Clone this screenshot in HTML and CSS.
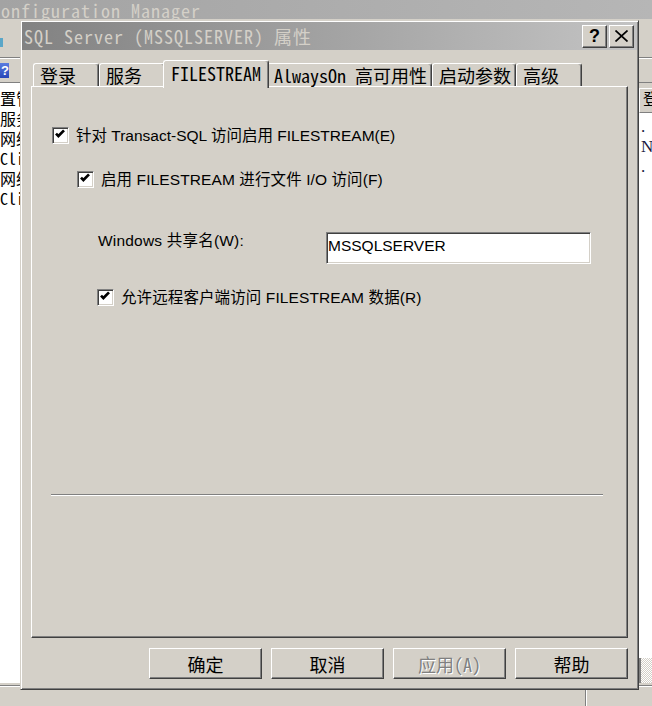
FILE: index.html
```html
<!DOCTYPE html>
<html lang="zh-CN">
<head>
<meta charset="utf-8">
<title>SQL Server (MSSQLSERVER) 属性</title>
<link rel="stylesheet" href="styles.css">
</head>
<body>
<div class="app">
  <div class="app-title mono">Configuration Manager</div>
  <div class="app-menu"><span class="menu-icon"></span></div>
  <div class="app-toolbar"><span class="help-icon">?</span></div>
  <div class="app-main">
    <ul class="tree mono">
      <li>置管</li>
      <li>服务</li>
      <li>网络</li>
      <li>Cli</li>
      <li>网络</li>
      <li>Cli</li>
    </ul>
    <div class="app-center"></div>
    <div class="list">
      <div class="list-head">登</div>
      <ul class="list-body">
        <li>.</li>
        <li>N</li>
        <li>.</li>
      </ul>
      <div class="hscroll"></div>
    </div>
  </div>
  <div class="app-status">
    <div class="status-cell"></div>
    <div class="status-cell grow"></div>
  </div>
</div>

<div class="dialog">
  <div class="caption">
    <span class="caption-text mono">SQL Server (MSSQLSERVER) 属性</span>
    <div class="caption-buttons">
      <button class="cap-btn help" type="button">?</button>
      <button class="cap-btn close" type="button"><svg width="13" height="12" viewBox="0 0 13 12"><path d="M0.5 0.5 L12.5 11.5 M12.5 0.5 L0.5 11.5" stroke="#000" stroke-width="1.7" fill="none"/></svg></button>
    </div>
  </div>
  <div class="dialog-body">
    <div class="tabs mono">
      <div class="tab">登录</div>
      <div class="tab">服务</div>
      <div class="tab active">FILESTREAM</div>
      <div class="tab">AlwaysOn 高可用性</div>
      <div class="tab">启动参数</div>
      <div class="tab">高级</div>
    </div>
    <div class="panel">
      <div class="check row-enable">
        <span class="box"><svg width="13" height="13" viewBox="0 0 13 13"><polyline points="2,4.6 4.4,7 10,1.4" fill="none" stroke="#000" stroke-width="2.7"/></svg></span>
        <span class="label">针对 Transact-SQL 访问启用 FILESTREAM(E)</span>
      </div>
      <div class="check row-io">
        <span class="box"><svg width="13" height="13" viewBox="0 0 13 13"><polyline points="2,4.6 4.4,7 10,1.4" fill="none" stroke="#000" stroke-width="2.7"/></svg></span>
        <span class="label">启用 FILESTREAM 进行文件 I/O 访问(F)</span>
      </div>
      <div class="share-row">
        <span class="share-label">Windows 共享名(W):</span>
        <div class="textbox">MSSQLSERVER</div>
      </div>
      <div class="check row-remote">
        <span class="box"><svg width="13" height="13" viewBox="0 0 13 13"><polyline points="2,4.6 4.4,7 10,1.4" fill="none" stroke="#000" stroke-width="2.7"/></svg></span>
        <span class="label">允许远程客户端访问 FILESTREAM 数据(R)</span>
      </div>
      <div class="sep"></div>
    </div>
    <div class="buttons mono">
      <button class="btn" type="button">确定</button>
      <button class="btn" type="button">取消</button>
      <button class="btn disabled" type="button">应用(A)</button>
      <button class="btn" type="button">帮助</button>
    </div>
  </div>
</div>
</body>
</html>
```

FILE: styles.css
```css
* { box-sizing: border-box; }

html, body {
  margin: 0;
  padding: 0;
}

body {
  width: 652px;
  height: 706px;
  overflow: hidden;
  position: relative;
  background: #d4d0c8;
  color: #000;
  font-family: "Liberation Sans", "Noto Sans CJK SC", sans-serif;
}

.mono {
  font-family: "Noto Sans Mono CJK SC", "Liberation Mono", "Noto Sans CJK SC", monospace;
}

/* ---------- background application window ---------- */
.app {
  display: flex;
  flex-direction: column;
  height: 706px;
}

.app-title {
  height: 19px;
  background: linear-gradient(to right, #a3a3a3, #b6b6b6);
  color: #d4d0c8;
  font-size: 18px;
  letter-spacing: 1px;
  line-height: 20px;
  white-space: nowrap;
  overflow: hidden;
  text-indent: -9px;
}

.app-menu {
  height: 39px;
  padding-top: 19px;
  border-bottom: 1px solid #808080;
}

.menu-icon {
  display: block;
  width: 3px;
  height: 9px;
  background: #5aa6c8;
}

.app-toolbar {
  height: 24px;
  padding-top: 4px;
  border-top: 1px solid #fff;
}

.help-icon {
  display: block;
  width: 9px;
  height: 15px;
  background: linear-gradient(#5a7ce0, #2746b8);
  color: #fff;
  font: bold 13px/15px "Liberation Sans", sans-serif;
  text-align: right;
  overflow: hidden;
}

.app-main {
  flex: 1;
  display: flex;
  padding-bottom: 2px;
  border-bottom: 1px solid #808080;
  box-shadow: 0 1px 0 #fff;
}

.tree {
  width: 20px;
  margin: 0;
  padding: 5px 0 0;
  list-style: none;
  background: #fff;
  border-top: 1px solid #808080;
  overflow: hidden;
  font-size: 16px;
  line-height: 20px;
  white-space: nowrap;
}

.app-center {
  flex: 1;
}

.list {
  width: 13px;
  display: flex;
  flex-direction: column;
  border-top: 1px solid #808080;
  padding-top: 5px;
  overflow: hidden;
}

.list-head {
  height: 25px;
  padding-left: 3px;
  border-top: 1px solid #fff;
  border-left: 1px solid #fff;
  border-bottom: 1px solid #808080;
  font-size: 16px;
  line-height: 22px;
  white-space: nowrap;
}

.list-body {
  flex: 1;
  margin: 0;
  padding: 4px 0 0 2px;
  list-style: none;
  background: #fff;
  font-family: "Liberation Serif", serif;
  font-size: 17px;
  line-height: 20px;
  color: #1a1a40;
}

.hscroll {
  height: 25px;
  border-left: 2px solid #808080;
  background-color: #d4d0c8;
  background-image: repeating-conic-gradient(#fff 0 25%, #d4d0c8 0 50%);
  background-size: 2px 2px;
}

.app-status {
  height: 20px;
  display: flex;
}

.status-cell {
  width: 586px;
  border-right: 1px solid #808080;
  box-shadow: 1px 0 0 #fff;
}

.status-cell.grow {
  flex: 1;
  border-right: 0;
  box-shadow: none;
}

/* ---------- dialog window ---------- */
.dialog {
  position: absolute;
  left: 20px;
  top: 20px;
  width: 619px;
  height: 670px;
  padding: 1px;
  background: #d4d0c8;
  border: 1px solid;
  border-color: #d4d0c8 #404040 #404040 #d4d0c8;
  box-shadow: inset 1px 1px #fff, inset -1px -1px #808080;
  display: flex;
  flex-direction: column;
}

.caption {
  height: 28px;
  display: flex;
  align-items: center;
  padding: 0 3px 0 2px;
  background: linear-gradient(to right, #828282, #c3c3c3);
}

.caption-text {
  flex: 1;
  color: #d4d0c8;
  font-size: 18px;
  letter-spacing: 1px;
  line-height: 28px;
  white-space: nowrap;
}

.caption-buttons {
  display: flex;
  gap: 2px;
}

.cap-btn {
  width: 25px;
  height: 23px;
  padding: 0;
  margin: 0;
  background: #d4d0c8;
  border: 1px solid;
  border-color: #fff #404040 #404040 #fff;
  box-shadow: inset -1px -1px #808080;
  display: flex;
  align-items: center;
  justify-content: center;
  color: #000;
}

.cap-btn.help {
  font: bold 18px/1 "Liberation Sans", sans-serif;
}

.dialog-body {
  flex: 1;
  padding: 10px 9px 0;
}

/* tabs */
.tabs {
  display: flex;
  align-items: flex-end;
  height: 26px;
  padding-left: 2px;
  font-size: 18px;
}

.tab {
  height: 23px;
  min-width: 66px;
  padding: 0 4px 0 6px;
  background: #d4d0c8;
  border-top: 1px solid #fff;
  border-left: 1px solid #fff;
  border-right: 1px solid #404040;
  box-shadow: inset -1px 0 #808080;
  border-radius: 3px 3px 0 0;
  line-height: 22px;
  white-space: nowrap;
}

.tab.active {
  height: 28px;
  margin: 0 -2px -2px;
  padding: 1px 7px 0 7px;
  z-index: 1;
}

/* page panel */
.panel {
  height: 552px;
  padding: 40px 0 0 20px;
  border: 1px solid;
  border-color: #fff #404040 #404040 #fff;
  box-shadow: inset -1px -1px #808080;
  font-size: 15.5px;
}

.check {
  display: flex;
  align-items: center;
  gap: 7px;
  height: 17px;
}

.box {
  width: 17px;
  height: 17px;
  padding: 1px;
  background: #fff;
  border: 1px solid;
  border-color: #808080 #fff #fff #808080;
  box-shadow: inset 1px 1px #404040, inset -1px -1px #d4d0c8;
  display: flex;
}

.box svg {
  display: block;
}

.label {
  line-height: 17px;
  white-space: nowrap;
  letter-spacing: 0.1px;
}

.row-enable .label {
  letter-spacing: 0;
}

.row-io {
  margin: 27px 0 0 25px;
}

.share-row {
  display: flex;
  align-items: flex-start;
  margin: 44px 0 0 46px;
}

.share-label {
  width: 228px;
  line-height: 18px;
  white-space: nowrap;
  letter-spacing: 0.2px;
}

.textbox {
  width: 265px;
  height: 32px;
  padding: 4px 1px 0;
  background: #fff;
  border: 1px solid;
  border-color: #808080 #fff #fff #808080;
  box-shadow: inset 1px 1px #404040, inset -1px -1px #d4d0c8;
  line-height: 18px;
}

.row-remote {
  margin: 25px 0 0 45px;
}

.sep {
  width: 552px;
  margin: 188px 0 0 -1px;
  border-top: 1px solid #808080;
  border-bottom: 1px solid #fff;
}

/* buttons */
.buttons {
  display: flex;
  justify-content: flex-end;
  gap: 9px;
  margin-top: 10px;
}

.btn {
  width: 113px;
  height: 31px;
  padding: 0;
  margin: 0;
  background: #d4d0c8;
  border: 1px solid;
  border-color: #fff #404040 #404040 #fff;
  box-shadow: inset -1px -1px #808080;
  font-family: inherit;
  font-size: 18px;
  color: #000;
}

.btn.disabled {
  color: #808080;
  text-shadow: 1px 1px 0 #fff;
}
```
